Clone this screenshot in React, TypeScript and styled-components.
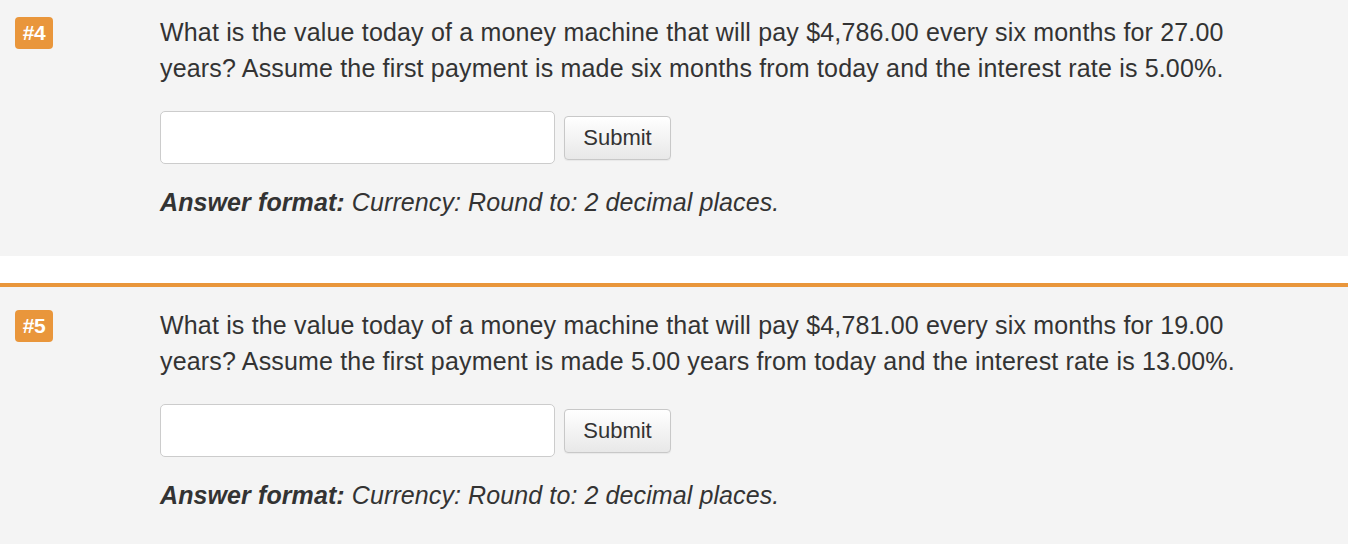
import React from 'react';
import styled, { createGlobalStyle } from 'styled-components';

const GlobalStyle = createGlobalStyle`
  html, body {
    margin: 0;
    padding: 0;
    background: #ffffff;
  }
  body {
    font-family: 'Liberation Sans', Arial, Helvetica, sans-serif;
    color: #333333;
  }
`;

const ORANGE = '#e9963b';

interface IQuestion {
  number: number;
  text: string;
}

const questions: IQuestion[] = [
  {
    number: 4,
    text: 'What is the value today of a money machine that will pay $4,786.00 every six months for 27.00 years? Assume the first payment is made six months from today and the interest rate is 5.00%.',
  },
  {
    number: 5,
    text: 'What is the value today of a money machine that will pay $4,781.00 every six months for 19.00 years? Assume the first payment is made 5.00 years from today and the interest rate is 13.00%.',
  },
];

const Question = ({ number, text, first }: IQuestion & { first: boolean }) => {
  return (
    <Card $first={first}>
      <BadgeCol>
        <Badge>#{number}</Badge>
      </BadgeCol>
      <Content>
        <Prompt>{text}</Prompt>
        <AnswerRow>
          <AnswerInput type="text" />
          <SubmitButton type="button">Submit</SubmitButton>
        </AnswerRow>
        <Format>
          <strong>Answer format:</strong> Currency: Round to: 2 decimal places.
        </Format>
      </Content>
    </Card>
  );
};

const App = () => {
  return (
    <>
      <GlobalStyle />
      <Page>
        {questions.map((q, i) => (
          <Question key={q.number} {...q} first={i === 0} />
        ))}
      </Page>
    </>
  );
};

const Page = styled.div`
  display: flex;
  flex-direction: column;
  gap: 27px;
`;

const Card = styled.section<{ $first: boolean }>`
  display: grid;
  grid-template-columns: 145px 1fr;
  background: #f4f4f4;
  border-top: ${(p) => (p.$first ? 'none' : `4px solid ${ORANGE}`)};
  padding: ${(p) => (p.$first ? '14px' : '20px')} 90px 36px 15px;
`;

const BadgeCol = styled.div`
  padding-top: 3px;
`;

const Badge = styled.span`
  display: inline-flex;
  align-items: center;
  justify-content: center;
  width: 38px;
  height: 32px;
  border-radius: 4px;
  background: ${ORANGE};
  color: #ffffff;
  font-weight: bold;
  font-size: 21px;
  letter-spacing: -0.5px;
`;

const Content = styled.div`
  display: flex;
  flex-direction: column;
`;

const Prompt = styled.p`
  margin: 0;
  font-size: 25px;
  letter-spacing: 0.17px;
  line-height: 36px;
`;

const AnswerRow = styled.div`
  display: flex;
  align-items: center;
  gap: 9px;
  margin-top: 25px;
`;

const AnswerInput = styled.input`
  box-sizing: border-box;
  width: 395px;
  height: 53px;
  border: 1px solid #cccccc;
  border-radius: 5px;
  background: #ffffff;
  margin: 0;
`;

const SubmitButton = styled.button`
  box-sizing: border-box;
  width: 107px;
  height: 44px;
  border: 1px solid #c8c8c8;
  border-radius: 4px;
  background: linear-gradient(#ffffff, #e8e8e8);
  box-shadow: 0 1px 1px rgba(0, 0, 0, 0.05);
  font-family: inherit;
  font-size: 22px;
  color: #333333;
  padding: 0;
`;

const Format = styled.p`
  margin: 20px 0 0;
  font-size: 25px;
  letter-spacing: 0.1px;
  line-height: 36px;
  font-style: italic;

  strong {
    font-weight: bold;
  }
`;

export default App;
